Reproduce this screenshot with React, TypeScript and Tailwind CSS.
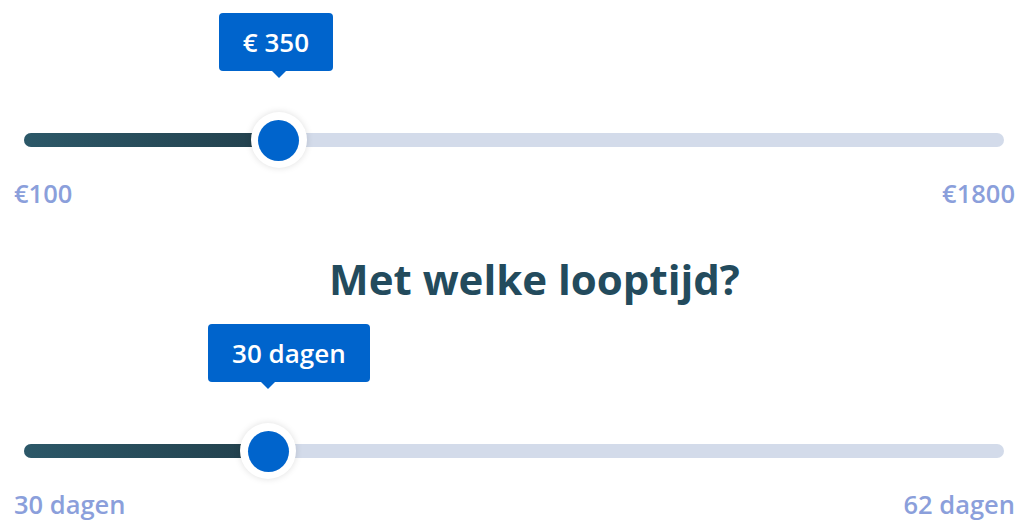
import React from "react";

function Slider({ pct, value, min, max }: { pct: number; value: string; min: string; max: string }) {
  return (
    <div>
      <div className="relative ml-[10px] mr-[11px] h-[14px] rounded-full bg-[#d3dbea]">
        <div
          className="absolute left-0 top-0 h-[14px] rounded-l-full bg-gradient-to-r from-[#2c5868] to-[#22404c]"
          style={{ width: `${pct}%` }}
        />
        <div className="absolute top-[7px]" style={{ left: `${pct}%` }}>
          <div className="absolute left-[-28px] top-[-28px] flex h-[56px] w-[56px] items-center justify-center rounded-full bg-white shadow-[0_0_7px_rgba(0,0,0,0.13)]">
            <div className="h-[41px] w-[41px] rounded-full bg-[#0064cc]" />
          </div>
          <div className="absolute bottom-[62px] left-[-60px]">
            <div className="whitespace-nowrap rounded-[4px] bg-[#0064cc] px-[24px] py-[12px] text-[26px] font-semibold leading-[34px] text-white">
              {value}
            </div>
            <div className="ml-[53px] h-0 w-0 border-l-[7px] border-r-[7px] border-t-[7px] border-l-transparent border-r-transparent border-t-[#0064cc]" />
          </div>
        </div>
      </div>
      <div className="mt-[30px] flex justify-between text-[25.5px] font-semibold leading-[32px] text-[#8b9fdb]">
        <span>{min}</span>
        <span>{max}</span>
      </div>
    </div>
  );
}

export default function App() {
  return (
    <div className="h-[529px] w-[1024px] overflow-hidden bg-white pl-[14px] pr-[9px] pt-[133px] font-['Open_Sans',sans-serif]">
      <Slider pct={26} value="€ 350" min="€100" max="€1800" />
      <h2 className="mt-[43px] pl-[40px] text-center text-[42px] font-bold leading-[54px] text-[#234b5d]">
        Met welke looptijd?
      </h2>
      <div className="mt-[138px]">
        <Slider pct={24.9} value="30 dagen" min="30 dagen" max="62 dagen" />
      </div>
    </div>
  );
}
